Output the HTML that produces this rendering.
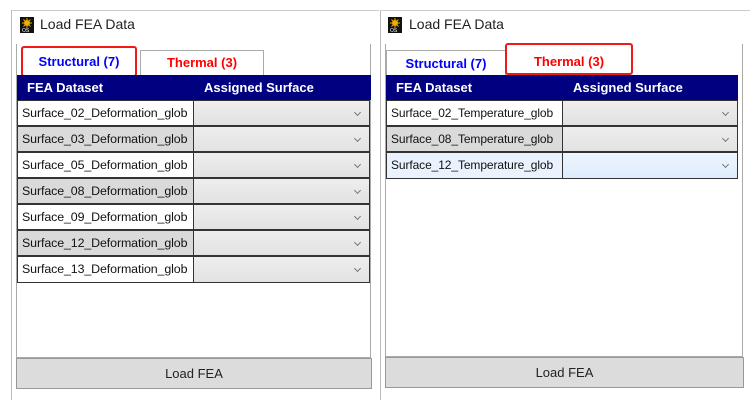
<!DOCTYPE html>
<html><head><meta charset="utf-8"><style>
*{box-sizing:border-box;margin:0;padding:0}
body{width:750px;height:400px;background:#fff;position:relative;overflow:hidden;font-family:"Liberation Sans",sans-serif}
.a{position:absolute}
.win{border-left:1px solid #bbb;border-top:1px solid #ccc}
.title{font-size:14px;color:#222}
.icon{width:14px;height:16px;background:#111}
.tab{border:1px solid #aaa;border-bottom:none;background:#fff;font-weight:bold;font-size:13px;text-align:center}
.red{border:2px solid #f01818;border-radius:3px}
.hdr{background:#000080;color:#fff;font-weight:bold;font-size:13px}
.cell{border:1px solid #333;font-size:12.4px;letter-spacing:-0.1px;color:#111;padding-left:4px;line-height:24px;overflow:hidden;white-space:nowrap}
.cb{border:1px solid #333;background:linear-gradient(#eee,#e2e2e2)}
.cb::after{content:"";position:absolute;right:9px;top:9px;width:4px;height:4px;border-right:1px solid #777;border-bottom:1px solid #777;transform:rotate(45deg)}
.btn{background:#dcdcdc;border:1px solid #999;font-size:13px;text-align:center;color:#222}
</style></head><body>
<!-- left -->
<div class="a win" style="left:11px;top:10px;width:368px;height:390px"></div>
<div class="a icon" style="left:20px;top:17px"><svg width="14" height="16"><circle cx="7" cy="6" r="3" fill="#f0b000"/><g stroke="#f0b000" stroke-width="1"><path d="M7 1v2M7 9v2M2 6h2M10 6h2M3.5 2.5l1.5 1.5M10.5 2.5l-1.5 1.5M3.5 9.5l1.5-1.5M10.5 9.5l-1.5-1.5"/></g><text x="2" y="15" font-size="5" fill="#fff" font-family="Liberation Sans">OS</text></svg></div>
<div class="a title" style="left:40px;top:16px">Load FEA Data</div>
<div class="a" style="left:16px;top:44px;width:355px;height:314px;border:1px solid #aaa;border-top:none"></div>
<div class="a tab" style="left:140px;top:50px;width:124px;height:25px;line-height:24px;color:#f00">Thermal (3)</div>
<div class="a tab" style="left:17px;top:46px;width:123px;height:30px;line-height:30px;color:#00f;border-color:#fff"></div>
<div class="a red" style="left:21px;top:46px;width:116px;height:31px;line-height:28px;color:#00f;font-weight:bold;font-size:13px;text-align:center">Structural (7)</div>
<div class="a hdr" style="left:17px;top:75px;width:354px;height:25px"><span class="a" style="left:10px;top:5px">FEA Dataset</span><span class="a" style="left:187px;top:5px">Assigned Surface</span></div>
<div class="a cell" style="left:17px;top:100px;width:177px;height:26px;background:#fff">Surface_02_Deformation_glob</div><div class="a cb" style="left:193px;top:100px;width:177px;height:26px"></div>
<div class="a cell" style="left:17px;top:126px;width:177px;height:26px;background:#dadada">Surface_03_Deformation_glob</div><div class="a cb" style="left:193px;top:126px;width:177px;height:26px"></div>
<div class="a cell" style="left:17px;top:152px;width:177px;height:26px;background:#fff">Surface_05_Deformation_glob</div><div class="a cb" style="left:193px;top:152px;width:177px;height:26px"></div>
<div class="a cell" style="left:17px;top:178px;width:177px;height:26px;background:#dadada">Surface_08_Deformation_glob</div><div class="a cb" style="left:193px;top:178px;width:177px;height:26px"></div>
<div class="a cell" style="left:17px;top:204px;width:177px;height:26px;background:#fff">Surface_09_Deformation_glob</div><div class="a cb" style="left:193px;top:204px;width:177px;height:26px"></div>
<div class="a cell" style="left:17px;top:230px;width:177px;height:26px;background:#dadada">Surface_12_Deformation_glob</div><div class="a cb" style="left:193px;top:230px;width:177px;height:26px"></div>
<div class="a cell" style="left:17px;top:256px;width:177px;height:27px;background:#fff">Surface_13_Deformation_glob</div><div class="a cb" style="left:193px;top:256px;width:177px;height:27px"></div>
<div class="a btn" style="left:16px;top:358px;width:356px;height:31px;line-height:30px">Load FEA</div>
<!-- right -->
<div class="a win" style="left:380px;top:10px;width:370px;height:390px"></div>
<div class="a icon" style="left:388px;top:17px"><svg width="14" height="16"><circle cx="7" cy="6" r="3" fill="#f0b000"/><g stroke="#f0b000" stroke-width="1"><path d="M7 1v2M7 9v2M2 6h2M10 6h2M3.5 2.5l1.5 1.5M10.5 2.5l-1.5 1.5M3.5 9.5l1.5-1.5M10.5 9.5l-1.5-1.5"/></g><text x="2" y="15" font-size="5" fill="#fff" font-family="Liberation Sans">OS</text></svg></div>
<div class="a title" style="left:409px;top:16px">Load FEA Data</div>
<div class="a" style="left:385px;top:44px;width:358px;height:313px;border:1px solid #aaa;border-top:none"></div>
<div class="a tab" style="left:386px;top:50px;width:120px;height:25px;line-height:26px;color:#00f">Structural (7)</div>
<div class="a red" style="left:505px;top:43px;width:128px;height:32px;line-height:34px;color:#f00;font-weight:bold;font-size:13px;text-align:center;background:#fff">Thermal (3)</div>
<div class="a hdr" style="left:386px;top:75px;width:352px;height:25px"><span class="a" style="left:10px;top:5px">FEA Dataset</span><span class="a" style="left:187px;top:5px">Assigned Surface</span></div>
<div class="a cell" style="left:386px;top:100px;width:177px;height:26px;background:#fff;font-size:12px">Surface_02_Temperature_glob</div><div class="a cb" style="left:562px;top:100px;width:176px;height:26px"></div>
<div class="a cell" style="left:386px;top:126px;width:177px;height:26px;background:#dadada;font-size:12px">Surface_08_Temperature_glob</div><div class="a cb" style="left:562px;top:126px;width:176px;height:26px"></div>
<div class="a cell" style="left:386px;top:152px;width:177px;height:27px;background:#eaf3fd;font-size:12px">Surface_12_Temperature_glob</div><div class="a cb" style="left:562px;top:152px;width:176px;height:27px;background:linear-gradient(#eef6fe,#dcecfc)"></div>
<div class="a btn" style="left:385px;top:357px;width:359px;height:31px;line-height:30px">Load FEA</div>
</body></html>
